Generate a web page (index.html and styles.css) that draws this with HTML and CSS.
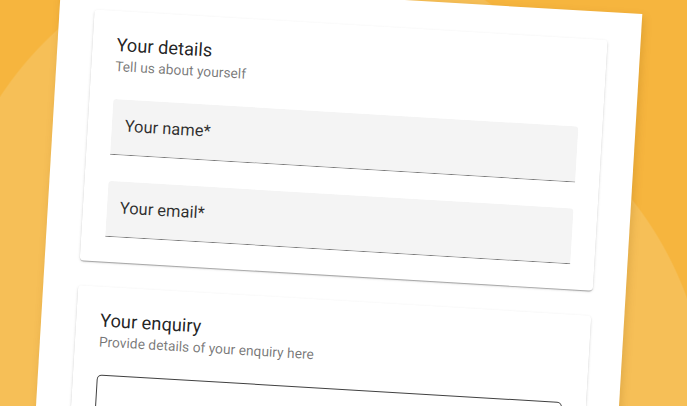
FILE: index.html
```html
<!DOCTYPE html>
<html lang="en">
<head>
<meta charset="utf-8">
<title>Contact form</title>
<link rel="stylesheet" href="styles.css">
</head>
<body>
<div class="stage">
  <div class="paper">
    <section class="card">
      <h2 class="title">Your details</h2>
      <p class="subtitle">Tell us about yourself</p>
      <div class="fields">
        <div class="field">Your name*</div>
        <div class="field">Your email*</div>
      </div>
    </section>
    <section class="card">
      <h2 class="title">Your enquiry</h2>
      <p class="subtitle">Provide details of your enquiry here</p>
      <div class="fields">
        <div class="outlined"></div>
      </div>
    </section>
  </div>
</div>
</body>
</html>
```
FILE: styles.css
```css
html, body {
  margin: 0;
  padding: 0;
}

body {
  font-family: Roboto, "Noto Sans", Arial, sans-serif;
  background: #f6b53e;
}

.stage {
  width: 687px;
  height: 406px;
  overflow: hidden;
  background:
    radial-gradient(circle 348px at 290px 287px, #f6bf57 346px, rgba(246, 191, 87, 0) 347.5px),
    radial-gradient(circle 351px at 358px 417px, #f6bf57 349px, rgba(246, 191, 87, 0) 350.5px),
    #f6b53e;
}

.paper {
  width: 582px;
  min-height: 520px;
  box-sizing: border-box;
  margin-top: -24px;
  margin-left: 60px;
  padding: 28px 33px 0 35px;
  background: #ffffff;
  box-shadow: 2px 3px 9px rgba(120, 70, 0, 0.18);
  transform: rotate(3.4deg);
  transform-origin: -60px 24px;
}

.card {
  background: #ffffff;
  border-radius: 4px;
  padding: 23px 24px 25px;
  box-shadow:
    0 2px 1px -1px rgba(0, 0, 0, 0.2),
    0 1px 1px 0 rgba(0, 0, 0, 0.14),
    0 1px 3px 0 rgba(0, 0, 0, 0.12);
}

.card + .card {
  margin-top: 25px;
}

.title {
  margin: 0;
  font-size: 18.3px;
  line-height: 21px;
  font-weight: 400;
  color: rgba(0, 0, 0, 0.87);
}

.subtitle {
  margin: 3px 0 0;
  font-size: 13.8px;
  line-height: 16px;
  color: rgba(0, 0, 0, 0.54);
}

.fields {
  margin-top: 25px;
  display: flex;
  flex-direction: column;
  gap: 26px;
}

.field {
  height: 56px;
  box-sizing: border-box;
  padding: 17px 13px 0;
  background: #f4f4f4;
  border-radius: 4px 4px 0 0;
  border-bottom: 1px solid rgba(0, 0, 0, 0.5);
  font-size: 16.5px;
  color: rgba(0, 0, 0, 0.82);
}

.outlined {
  height: 110px;
  border: 1px solid rgba(0, 0, 0, 0.75);
  border-radius: 5px;
}
```
